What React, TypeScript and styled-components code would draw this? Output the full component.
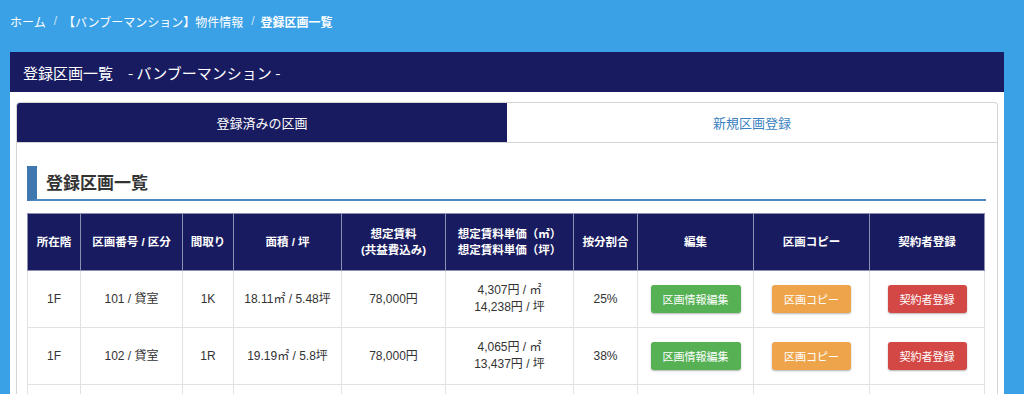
import React from 'react';
import styled, { createGlobalStyle } from 'styled-components';

const GlobalStyle = createGlobalStyle`
  html, body {
    margin: 0;
    padding: 0;
    background: #3ba1e7;
    font-family: "Liberation Sans", "Noto Sans CJK JP", sans-serif;
    overflow: hidden;
  }
  * {
    box-sizing: border-box;
  }
`;

type Row = {
  floor: string;
  unit: string;
  layout: string;
  area: string;
  rent: string;
  unitM2: string;
  unitTsubo: string;
  ratio: string;
};

const rows: Row[] = [
  { floor: '1F', unit: '101 / 貸室', layout: '1K', area: '18.11㎡ / 5.48坪', rent: '78,000円', unitM2: '4,307円 / ㎡', unitTsubo: '14,238円 / 坪', ratio: '25%' },
  { floor: '1F', unit: '102 / 貸室', layout: '1R', area: '19.19㎡ / 5.8坪', rent: '78,000円', unitM2: '4,065円 / ㎡', unitTsubo: '13,437円 / 坪', ratio: '38%' },
];

const colWidths = [53, 102, 51, 108, 104, 128, 64, 116, 116, 115];

const App = () => {
  return (
    <>
      <GlobalStyle />
      <Page>
        <Breadcrumb>
          <Crumb>ホーム</Crumb>
          <Sep>/</Sep>
          <Crumb>【バンブーマンション】物件情報</Crumb>
          <Sep>/</Sep>
          <Crumb $current>登録区画一覧</Crumb>
        </Breadcrumb>

        <Panel>
          <PanelHeader>登録区画一覧　- バンブーマンション -</PanelHeader>
          <PanelBody>
            <TabBox>
              <TabBar>
                <Tab $active>登録済みの区画</Tab>
                <Tab>新規区画登録</Tab>
              </TabBar>
              <TabContent>
                <SectionTitle>登録区画一覧</SectionTitle>
                <Table>
                  <colgroup>
                    {colWidths.map((w, i) => (
                      <col key={i} style={{ width: w }} />
                    ))}
                  </colgroup>
                  <thead>
                    <tr>
                      <Th>所在階</Th>
                      <Th>区画番号 / 区分</Th>
                      <Th>間取り</Th>
                      <Th>面積 / 坪</Th>
                      <Th>想定賃料<br />(共益費込み)</Th>
                      <Th>想定賃料単価（㎡）<br />想定賃料単価（坪）</Th>
                      <Th>按分割合</Th>
                      <Th>編集</Th>
                      <Th>区画コピー</Th>
                      <Th>契約者登録</Th>
                    </tr>
                  </thead>
                  <tbody>
                    {rows.map((r, i) => (
                      <tr key={i}>
                        <Td>{r.floor}</Td>
                        <Td>{r.unit}</Td>
                        <Td>{r.layout}</Td>
                        <Td>{r.area}</Td>
                        <Td>{r.rent}</Td>
                        <Td>{r.unitM2}<br />{r.unitTsubo}</Td>
                        <Td>{r.ratio}</Td>
                        <Td><Button $color="#55b154">区画情報編集</Button></Td>
                        <Td><Button $color="#eea44b">区画コピー</Button></Td>
                        <Td><Button $color="#d34845">契約者登録</Button></Td>
                      </tr>
                    ))}
                    <tr>
                      {colWidths.map((_, i) => (
                        <Td key={i} />
                      ))}
                    </tr>
                  </tbody>
                </Table>
              </TabContent>
            </TabBox>
          </PanelBody>
        </Panel>
      </Page>
    </>
  );
};

export default App;

const Page = styled.div`
  padding: 0 20px 0 10px;
`;

const Breadcrumb = styled.div`
  display: flex;
  align-items: center;
  height: 52px;
  padding-bottom: 10px;
  font-size: 12px;
  color: #fff;
`;

const Crumb = styled.span<{ $current?: boolean }>`
  font-weight: ${(p) => (p.$current ? 'bold' : 'normal')};
`;

const Sep = styled.span`
  color: #c9e2f6;
  margin: 0 6px 0 8px;
`;

const Panel = styled.div`
  background: #fff;
`;

const PanelHeader = styled.div`
  height: 40px;
  display: flex;
  align-items: center;
  padding-left: 13px;
  background: #181b5f;
  color: #fff;
  font-size: 15px;
  font-family: "Noto Sans CJK JP", sans-serif;
`;

const PanelBody = styled.div`
  padding: 10px 6px 0 6px;
`;

const TabBox = styled.div`
  border: 1px solid #d4d4d4;
  border-bottom: none;
  border-radius: 4px 4px 0 0;
`;

const TabBar = styled.div`
  display: flex;
  border-bottom: 1px solid #d4d4d4;
`;

const Tab = styled.div<{ $active?: boolean }>`
  flex: 1;
  height: 39px;
  display: flex;
  align-items: center;
  justify-content: center;
  font-size: 13px;
  font-family: "Noto Sans CJK JP", sans-serif;
  background: ${(p) => (p.$active ? '#181b5f' : '#fff')};
  color: ${(p) => (p.$active ? '#fff' : '#3a7fc0')};
  border-radius: ${(p) => (p.$active ? '3px 0 0 0' : '0 4px 0 0')};
`;

const TabContent = styled.div`
  padding: 23px 11px 0 10px;
`;

const SectionTitle = styled.h2`
  margin: 0;
  height: 35px;
  display: flex;
  align-items: center;
  padding: 0 0 2px 9px;
  border-left: 10px solid #3f78ae;
  border-bottom: 2px solid #4d88c2;
  font-size: 17px;
  font-weight: bold;
  color: #333;
  font-family: "Noto Sans CJK JP", sans-serif;
`;

const Table = styled.table`
  margin-top: 12px;
  width: 958px;
  border-collapse: collapse;
  table-layout: fixed;
  border: 1px solid #dcdcdc;
`;

const Th = styled.th`
  height: 57px;
  background: #181b5f;
  color: #fff;
  font-size: 11.5px;
  font-weight: bold;
  line-height: 16px;
  text-align: center;
  border: 1px solid #8d8fb0;
  padding: 0 3px;
`;

const Td = styled.td`
  height: 57px;
  font-size: 12px;
  line-height: 17px;
  color: #333;
  text-align: center;
  border: 1px solid #e2e2e2;
  padding: 0 3px;
`;

const Button = styled.button<{ $color: string }>`
  height: 28px;
  padding: 0 12px;
  border: none;
  border-radius: 3px;
  background: ${(p) => p.$color};
  color: #fff;
  font-size: 11px;
  font-family: "Noto Sans CJK JP", sans-serif;
  box-shadow: 0 1px 2px rgba(0, 0, 0, 0.3);
  white-space: nowrap;
`;
